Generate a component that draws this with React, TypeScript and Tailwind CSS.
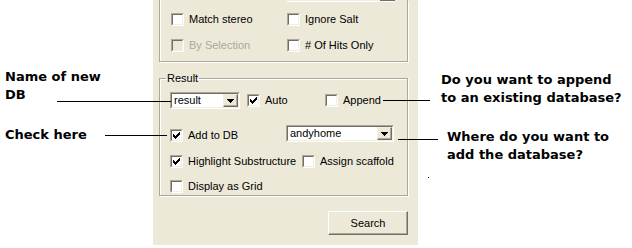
import React from 'react';

const font = "font-['Liberation_Sans',Arial,sans-serif]";

const Check = () => (
  <svg width="9" height="9" viewBox="0 0 9 9" shapeRendering="crispEdges">
    <path
      fill="#000"
      d="M7 1h1v1h-1zM6 2h2v1h-2zM1 3h1v1h-1zM5 3h3v1h-3zM1 4h2v1h-2zM4 4h3v1h-3zM1 5h5v1h-5zM2 6h3v1h-3zM3 7h1v1h-1z"
    />
  </svg>
);

const Box = ({ checked = false, disabled = false }: { checked?: boolean; disabled?: boolean }) => (
  <div className="w-[13px] h-[13px] shrink-0 flex border border-t-[#ACA899] border-l-[#ACA899] border-r-white border-b-white">
    <div
      className={`flex-1 border border-t-[#716F64] border-l-[#716F64] border-r-[#F1EFE2] border-b-[#F1EFE2] ${
        disabled ? 'bg-[#ECE9D8]' : 'bg-white'
      }`}
    >
      {checked && <Check />}
    </div>
  </div>
);

const CheckItem = ({
  label,
  checked,
  disabled,
  className = '',
}: {
  label: string;
  checked?: boolean;
  disabled?: boolean;
  className?: string;
}) => (
  <div className={`flex items-center h-[13px] gap-[5px] ${className}`}>
    <Box checked={checked} disabled={disabled} />
    <span className={`text-[11px] leading-[13px] whitespace-nowrap ${disabled ? 'text-[#ACA899]' : 'text-black'}`}>
      {label}
    </span>
  </div>
);

const Arrow = () => (
  <svg width="7" height="4" viewBox="0 0 7 4" shapeRendering="crispEdges">
    <path fill="#000" d="M0 0h7v1h-7zM1 1h5v1h-5zM2 2h3v1h-3zM3 3h1v1h-1z" />
  </svg>
);

const Combo = ({ value, className = '' }: { value: string; className?: string }) => (
  <div className={`h-[17px] flex border border-t-[#ACA899] border-l-[#ACA899] border-r-white border-b-white ${className}`}>
    <div className="flex-1 flex border border-t-[#716F64] border-l-[#716F64] border-r-[#F1EFE2] border-b-[#F1EFE2] bg-white">
      <span className="flex-1 pl-[2px] text-[11px] leading-[13px] text-black">{value}</span>
      <div className="w-[15px] flex items-center justify-center bg-[#ECE9D8] border border-t-[#F1EFE2] border-l-[#F1EFE2] border-r-[#716F64] border-b-[#716F64] shadow-[inset_-1px_-1px_0_#ACA899]">
        <Arrow />
      </div>
    </div>
  </div>
);

const Note = ({ lines, className = '' }: { lines: string[]; className?: string }) => (
  <div className={`font-['DejaVu_Sans',Verdana,sans-serif] font-bold text-[13px] leading-[18px] text-black ${className}`}>
    {lines.map((l) => (
      <div key={l} className="whitespace-nowrap">
        {l}
      </div>
    ))}
  </div>
);

export default function App() {
  return (
    <div className={`relative w-[632px] h-[248px] bg-white flex overflow-hidden ${font}`}>
      {/* left notes */}
      <div className="w-[153px] shrink-0 flex flex-col pl-[5px] pt-[68px]">
        <Note lines={['Name of new', 'DB']} />
        <Note lines={['Check here']} className="mt-[22px]" />
      </div>

      {/* dialog panel */}
      <div className="w-[265px] h-[245px] shrink-0 bg-[#ECE9D8] flex flex-col pl-[6px]">
        <div className="w-[249px] h-[62px] flex flex-col border border-t-0 border-[#ACA899] shadow-[1px_1px_0_#fff,inset_1px_0_0_#fff]">
          <div className="ml-[127px] w-[108px] h-[2px] flex border-b border-b-white">
            <div className="flex-1 border-b border-b-[#F1EFE2] bg-white" />
            <div className="w-[15px] bg-[#ECE9D8] border-b border-r border-[#716F64]" />
          </div>
          <div className="flex mt-[11px] pl-[11px]">
            <CheckItem label="Match stereo" className="w-[116px]" />
            <CheckItem label="Ignore Salt" />
          </div>
          <div className="flex mt-[13px] pl-[11px]">
            <CheckItem label="By Selection" disabled className="w-[116px]" />
            <CheckItem label="# Of Hits Only" />
          </div>
        </div>

        <fieldset className="mt-[9px] w-[249px] border border-[#ACA899] shadow-[1px_1px_0_#fff,inset_1px_1px_0_#fff] pl-[10px] pt-[7px] pb-[2px]">
          <legend className="-ml-[4px] px-[1px] text-[11px] leading-[14px] text-black">Result</legend>
          <div className="flex items-center h-[17px]">
            <Combo value="result" className="w-[70px]" />
            <CheckItem label="Auto" checked className="ml-[7px] w-[78px]" />
            <CheckItem label="Append" />
          </div>
          <div className="flex items-center h-[17px] mt-[16px]">
            <CheckItem label="Add to DB" checked className="w-[116px] mt-[4px]" />
            <Combo value="andyhome" className="w-[108px]" />
          </div>
          <div className="flex mt-[13px]">
            <CheckItem label="Highlight Substructure" checked className="w-[132px]" />
            <CheckItem label="Assign scaffold" />
          </div>
          <div className="flex mt-[12px]">
            <CheckItem label="Display as Grid" />
          </div>
        </fieldset>

        <button className="mt-[15px] ml-[169px] w-[80px] h-[24px] flex items-center justify-center bg-[#ECE9D8] border border-t-white border-l-white border-r-[#716F64] border-b-[#716F64] shadow-[inset_-1px_-1px_0_#ACA899] text-[11px] text-black">
          Search
        </button>
      </div>

      {/* right notes */}
      <div className="flex-1 flex flex-col pt-[71px]">
        <Note lines={['Do you want to append', 'to an existing database?']} className="ml-[23px]" />
        <Note lines={['Where do you want to', 'add the database?']} className="ml-[29px] mt-[21px]" />
      </div>

      {/* leader lines */}
      <div className="absolute left-[57px] top-[101px] w-[114px] h-px bg-black" />
      <div className="absolute left-[105px] top-[135px] w-[62px] h-px bg-black" />
      <div className="absolute left-[383px] top-[100px] w-[47px] h-px bg-black" />
      <div className="absolute left-[398px] top-[139px] w-[40px] h-px bg-black" />
      <div className="absolute left-[428px] top-[177px] w-px h-px bg-black" />
    </div>
  );
}
